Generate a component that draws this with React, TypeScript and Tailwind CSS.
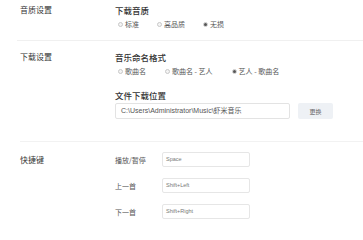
const cjk = "font-['Noto_Sans_CJK_SC','Liberation_Sans',sans-serif]";
const latin = "font-['Liberation_Sans','Noto_Sans_CJK_SC',sans-serif]";

function Radio({ label, checked }: { label: string; checked?: boolean }) {
  return (
    <div className="flex h-[10px] items-center gap-[2px] text-[7px] leading-[10px] text-[#555]">
      <span className="flex h-[5px] w-[5px] items-center justify-center rounded-full border-[0.5px] border-[#c8c8c8] bg-[#f4f4f4]">
        {checked && <span className="h-[3px] w-[3px] rounded-full bg-[#555]" />}
      </span>
      <span>{label}</span>
    </div>
  );
}

function Shortcut({ label, value }: { label: string; value: string }) {
  return (
    <div className="flex items-center">
      <span className="w-[47px] text-[7px] leading-[10px] text-[#555]">{label}</span>
      <div className={`flex h-[15px] w-[88px] items-center rounded-[2px] border border-[#e6e6e6] px-[3px] text-[5.5px] text-[#777] ${latin}`}>
        {value}
      </div>
    </div>
  );
}

export default function App() {
  return (
    <div className={`h-[225px] w-[363px] overflow-hidden bg-white ${cjk}`}>
      {/* 音质设置 */}
      <div className="flex pl-[20px] pt-[4px]">
        <div className="h-[12px] w-[95px] text-[8px] leading-[12px] text-[#333]">音质设置</div>
        <div className="flex flex-col gap-[3px]">
          <div className="h-[12px] text-[8.5px] font-medium leading-[12px] text-[#333]">下载音质</div>
          <div className="flex gap-[18px] pl-[3px]">
            <Radio label="标准" />
            <Radio label="高品质" />
            <Radio label="无损" checked />
          </div>
        </div>
      </div>
      <div className="ml-[17px] mt-[11px] h-px bg-[#f0f0f0]" />

      {/* 下载设置 */}
      <div className="flex pl-[20px] pt-[10px]">
        <div className="h-[12px] w-[95px] text-[8px] leading-[12px] text-[#333]">下载设置</div>
        <div className="flex flex-col">
          <div className="h-[12px] text-[8.5px] font-medium leading-[12px] text-[#333]">音乐命名格式</div>
          <div className="mt-[3px] flex gap-[19px] pl-[3px]">
            <Radio label="歌曲名" />
            <Radio label="歌曲名 - 艺人" />
            <Radio label="艺人 - 歌曲名" checked />
          </div>
          <div className="mt-[13px] h-[12px] text-[8.5px] font-medium leading-[12px] text-[#333]">文件下载位置</div>
          <div className="mt-[2px] flex items-center gap-[8px]">
            <div className={`flex h-[16px] w-[175px] items-center rounded-[2px] border border-[#e3e3e3] px-[5px] text-[7px] text-[#555] ${latin}`}>
              C:\Users\Administrator\Music\虾米音乐
            </div>
            <div className="flex h-[16px] w-[35px] items-center justify-center rounded-[2px] bg-[#eef1f5] text-[6px] text-[#666]">
              更换
            </div>
          </div>
        </div>
      </div>
      <div className="ml-[20px] mt-[22px] h-px bg-[#f2f2f2]" />

      {/* 快捷键 */}
      <div className="flex pl-[20px] pt-[10px]">
        <div className="h-[14px] w-[95px] pt-[2px] text-[8px] leading-[12px] text-[#333]">快捷键</div>
        <div className="flex flex-col gap-[11px]">
          <Shortcut label="播放/暂停" value="Space" />
          <Shortcut label="上一首" value="Shift+Left" />
          <Shortcut label="下一首" value="Shift+Right" />
        </div>
      </div>
    </div>
  );
}
